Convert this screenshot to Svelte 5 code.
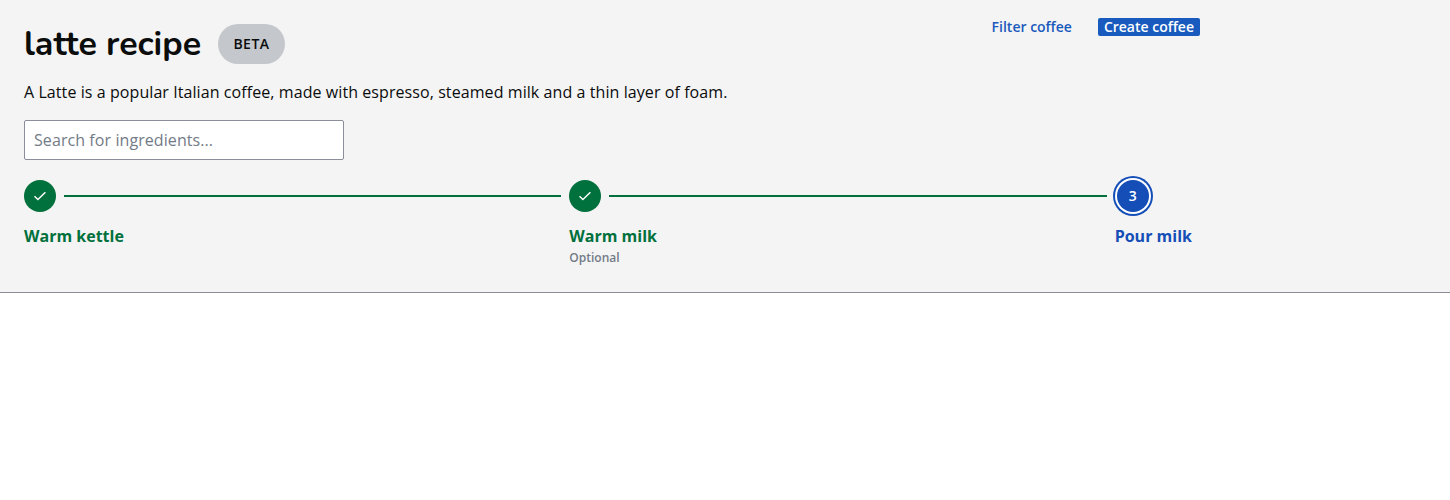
<script>
  const steps = [
    { label: 'Warm kettle', state: 'done' },
    { label: 'Warm milk', state: 'done', note: 'Optional' },
    { label: 'Pour milk', state: 'current' }
  ];
</script>

<header>
  <div class="inner">
    <div class="top">
      <div class="heading">
        <h1>latte recipe</h1>
        <span class="badge">BETA</span>
      </div>
      <div class="actions">
        <button>Filter coffee</button>
        <button class="primary">Create coffee</button>
      </div>
    </div>
    <p>A Latte is a popular Italian coffee, made with espresso, steamed milk and a thin layer of foam.</p>
    <input type="text" placeholder="Search for ingredients..." />
    <ol>
      {#each steps as step, i}
        <li class={step.state}>
          <div class="track">
            <span class="dot">
              {#if step.state === 'done'}
                <svg viewBox="0 0 16 16" width="16" height="16"><path d="M2.5 8.3L5.9 11.6L13.4 4.2" /></svg>
              {:else}
                {i + 1}
              {/if}
            </span>
            {#if i < steps.length - 1}<span class="line"></span>{/if}
          </div>
          <span class="label">{step.label}</span>
          {#if step.note}<span class="note">{step.note}</span>{/if}
        </li>
      {/each}
    </ol>
  </div>
</header>

<style>
  :global(body) {
    background: #fff;
  }
  header {
    box-sizing: border-box;
    height: 293px;
    background: #f4f4f4;
    border-bottom: 1px solid #8b8d9b;
    color: #0b0c0c;
    font-family: 'Open Sans', sans-serif;
    font-size: 16px;
    line-height: 24px;
  }
  .inner {
    box-sizing: border-box;
    width: 1200px;
    padding: 24px 0 0 24px;
  }
  .top {
    display: flex;
    justify-content: space-between;
    align-items: flex-start;
    height: 40px;
  }
  .heading {
    display: flex;
    gap: 16px;
  }
  h1 {
    margin: 0;
    width: 178px;
    white-space: nowrap;
    font: 700 34px/40px Nunito, Lato, sans-serif;
  }
  .badge {
    box-sizing: border-box;
    width: 67px;
    height: 40px;
    border-radius: 20px;
    background: #c4c7cc;
    text-align: center;
    font-size: 14px;
    line-height: 40px;
    font-weight: 600;
    letter-spacing: 0.5px;
  }
  .actions {
    display: flex;
    gap: 20px;
    margin-top: -6px;
  }
  button {
    box-sizing: border-box;
    height: 18px;
    margin: 0;
    padding: 0 6px;
    border: 0;
    border-radius: 2px;
    background: none;
    color: #1a5abc;
    font: 600 14px/18px 'Open Sans', sans-serif;
  }
  .primary {
    background: #185abd;
    color: #fff;
  }
  p {
    margin: 16px 0;
    letter-spacing: 0.078px;
  }
  input {
    display: block;
    box-sizing: border-box;
    width: 320px;
    height: 40px;
    margin: 0;
    padding: 0 9px;
    border: 1px solid #8b8d9b;
    border-radius: 2px;
    background: #fff;
    font: 400 16px/24px 'Open Sans', sans-serif;
    letter-spacing: 0.078px;
  }
  input::placeholder {
    color: #737b87;
    opacity: 1;
  }
  ol {
    display: grid;
    grid-template-columns: 545.33px 545.33px auto;
    margin: 20px 0 0;
    padding: 0;
    list-style: none;
  }
  li {
    display: flex;
    flex-direction: column;
    color: #00703c;
  }
  .track {
    display: flex;
    align-items: center;
    gap: 8px;
    height: 32px;
    padding-right: 8px;
  }
  .dot {
    display: flex;
    flex: none;
    align-items: center;
    justify-content: center;
    width: 32px;
    height: 32px;
    border-radius: 50%;
    background: #00703c;
    color: #fff;
    font-size: 14px;
    font-weight: 600;
  }
  .dot svg {
    fill: none;
    stroke: #fff;
    stroke-width: 1.4;
  }
  .line {
    flex: 1;
    height: 2px;
    background: #00703c;
  }
  .label {
    margin-top: 12px;
    font-weight: 700;
    white-space: nowrap;
  }
  .note {
    color: #737b87;
    font-size: 12px;
    line-height: 20px;
    font-weight: 600;
  }
  .current {
    color: #144eb6;
  }
  .current .dot {
    margin-left: 2px;
    background: #144eb6;
    box-shadow: 0 0 0 2px #fff, 0 0 0 4px #144eb6;
  }
</style>
